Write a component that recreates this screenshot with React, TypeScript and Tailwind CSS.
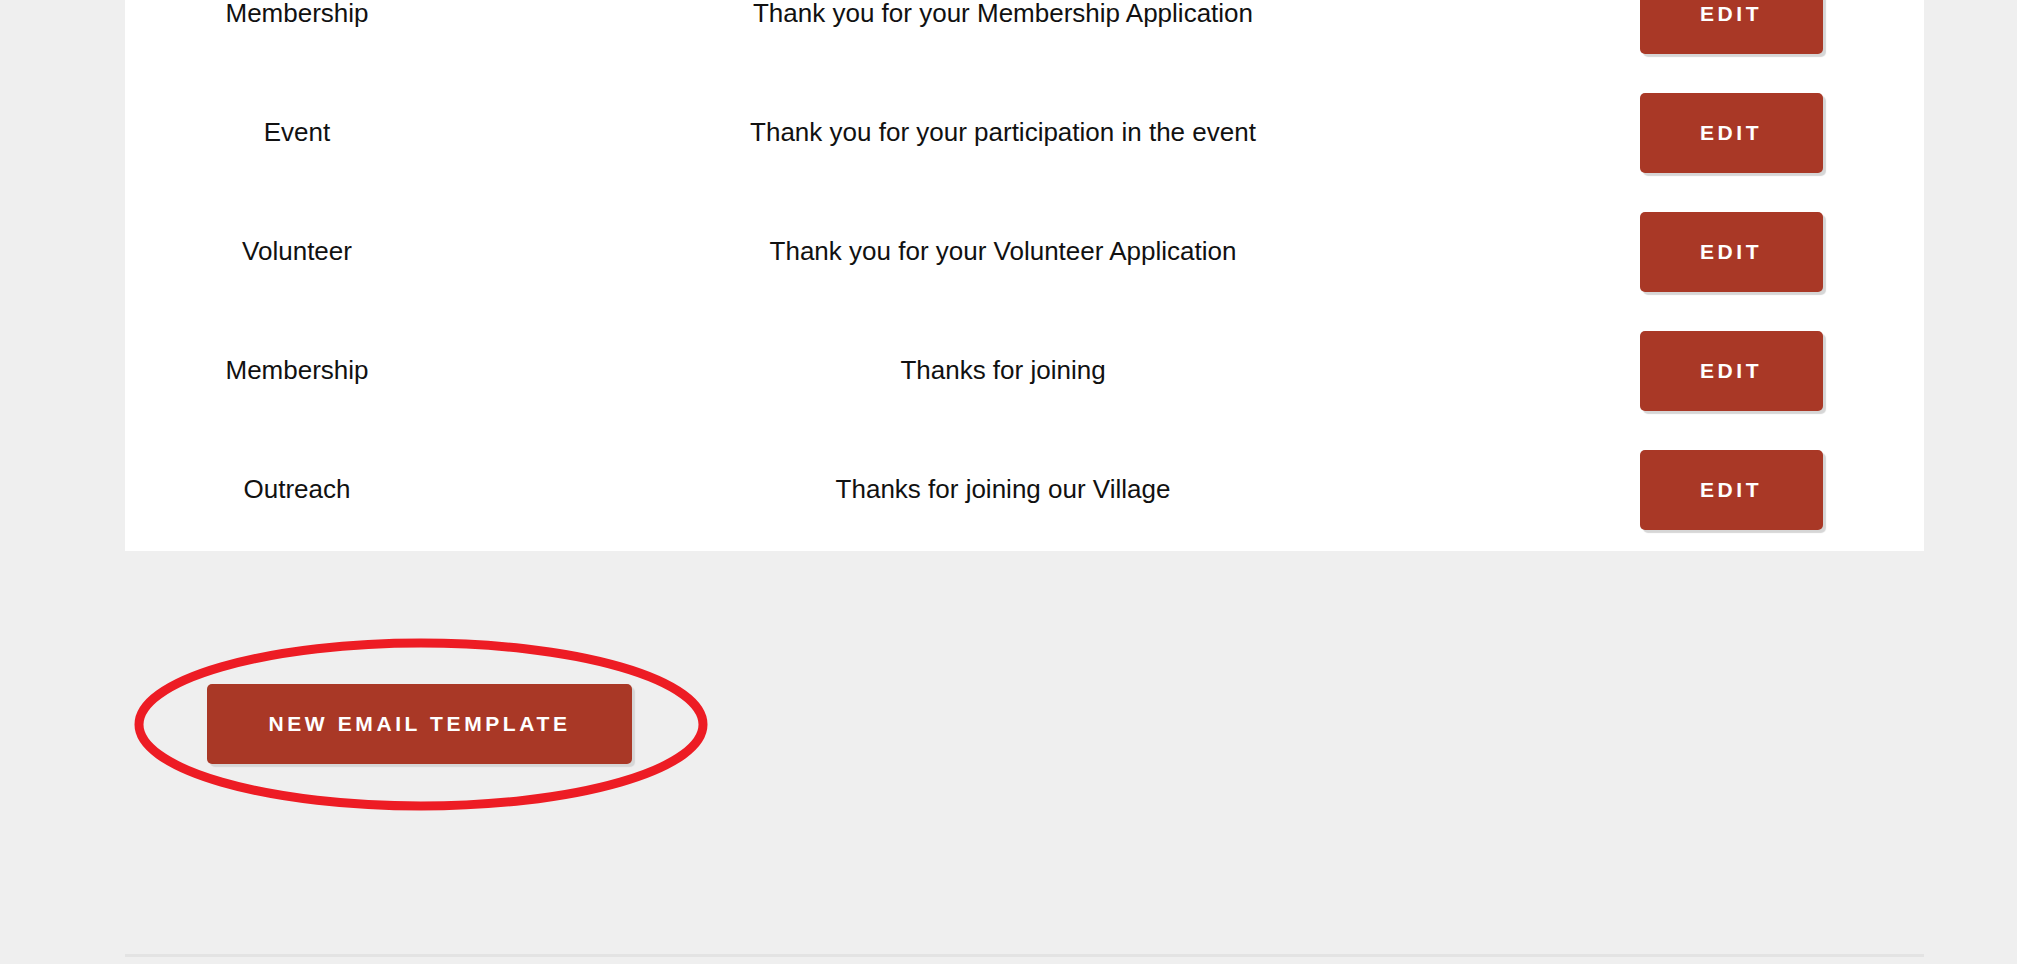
import React from "react";

const templates = [
  { category: "Membership", subject: "Thank you for your Membership Application" },
  { category: "Event", subject: "Thank you for your participation in the event" },
  { category: "Volunteer", subject: "Thank you for your Volunteer Application" },
  { category: "Membership", subject: "Thanks for joining" },
  { category: "Outreach", subject: "Thanks for joining our Village" },
];

function RedButton({ label, className = "" }: { label: string; className?: string }) {
  return (
    <button
      type="button"
      className={`h-[80px] rounded-[5px] bg-[#a93826] text-[21px] font-bold uppercase tracking-[3.6px] text-white shadow-[3px_3px_1px_#d6d6d6] ${className}`}
    >
      {label}
    </button>
  );
}

export default function App() {
  return (
    <div className="h-[964px] overflow-hidden bg-[#efefef] font-['Liberation_Sans',Arial,sans-serif] text-[#111]">
      <div className="-mt-[46px] ml-[125px] w-[1799px] bg-white pb-[2px]">
        {templates.map((t, i) => (
          <div key={i} className="grid h-[119px] grid-cols-[344px_1068px_1fr] items-center text-center text-[26px]">
            <span>{t.category}</span>
            <span>{t.subject}</span>
            <div className="flex justify-center pl-[1px]">
              <RedButton label="Edit" className="w-[183px]" />
            </div>
          </div>
        ))}
      </div>

      <div className="ml-[207px] mt-[133px] flex">
        <div className="relative">
          <RedButton label="New Email Template" className="w-[425px]" />
          <svg
            className="pointer-events-none absolute left-[-73px] top-[-46px]"
            width="574"
            height="173"
            viewBox="0 0 574 173"
          >
            <ellipse cx="287" cy="86.5" rx="282" ry="81.5" fill="none" stroke="#ed1c24" strokeWidth="9" />
          </svg>
        </div>
      </div>

      <div className="ml-[125px] mt-[190px] h-[3px] w-[1799px] bg-[#e3e3e3]" />
    </div>
  );
}
